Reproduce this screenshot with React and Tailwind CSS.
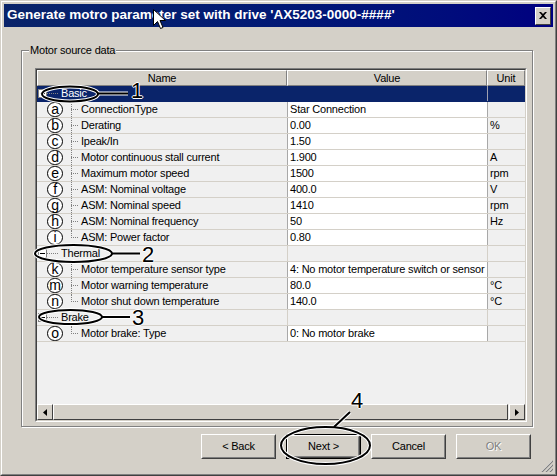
import React from 'react';

const rows = [
  { group: true, name: 'Basic', selected: true },
  { letter: 'a', name: 'ConnectionType', value: 'Star Connection', unit: '' },
  { letter: 'b', name: 'Derating', value: '0.00', unit: '%' },
  { letter: 'c', name: 'Ipeak/In', value: '1.50', unit: '' },
  { letter: 'd', name: 'Motor continuous stall current', value: '1.900', unit: 'A' },
  { letter: 'e', name: 'Maximum motor speed', value: '1500', unit: 'rpm' },
  { letter: 'f', name: 'ASM: Nominal voltage', value: '400.0', unit: 'V' },
  { letter: 'g', name: 'ASM: Nominal speed', value: '1410', unit: 'rpm' },
  { letter: 'h', name: 'ASM: Nominal frequency', value: '50', unit: 'Hz' },
  { letter: 'i', name: 'ASM: Power factor', value: '0.80', unit: '', last: true },
  { group: true, name: 'Thermal' },
  { letter: 'k', name: 'Motor temperature sensor type', value: '4: No motor temperature switch or sensor', unit: '' },
  { letter: 'm', name: 'Motor warning temperature', value: '80.0', unit: '°C' },
  { letter: 'n', name: 'Motor shut down temperature', value: '140.0', unit: '°C', last: true },
  { group: true, name: 'Brake' },
  { letter: 'o', name: 'Motor brake: Type', value: '0: No motor brake', unit: '', last: true },
];

const GroupRow = ({ row }) => {
  const sel = row.selected;
  return (
    <div className={`flex h-[16px] border-b ${sel ? 'bg-[#0a246a] border-[#0a246a] text-white' : 'bg-[#f0f0f0] border-[#d4d0c8]'}`}>
      <div className="w-[250px] flex items-center pl-[1px]">
        <div className="w-[9px] h-[9px] border border-[#808080] bg-white flex items-center justify-center">
          <div className="w-[5px] h-[1px] bg-black" />
        </div>
        <div className="w-[12px] h-full relative">
          <div className="absolute left-0 right-[1px] top-[7px] border-t border-dotted border-[#808080]" />
        </div>
        <span className="px-[2px] leading-[15px]">{row.name}</span>
      </div>
      <div className={`w-[200px] border-l ${sel ? 'border-[#0a246a]' : 'border-[#d4d0c8]'}`} />
      <div className={`flex-1 border-l ${sel ? 'border-[#a0a0b0]' : 'border-[#d4d0c8]'}`} />
    </div>
  );
};

const ItemRow = ({ row }) => (
  <div className="flex h-[16px] border-b border-[#d4d0c8] bg-[#f0f0f0]">
    <div className="w-[250px] flex items-center">
      <div className="w-[10px]" />
      <div className="w-[16px] h-[15px] rounded-full border-[1.5px] border-black bg-white flex items-center justify-center text-[14px] leading-none pb-[2px] text-black">
        {row.letter}
      </div>
      <div className="w-[17px] h-full relative">
        <div className={`absolute left-[8px] top-0 border-l border-dotted border-[#808080] ${row.last ? 'h-[8px]' : 'h-[15px]'}`} />
        <div className="absolute left-[8px] w-[7px] top-[7px] border-t border-dotted border-[#808080]" />
      </div>
      <span className="pl-[1px] leading-[15px] whitespace-nowrap">{row.name}</span>
    </div>
    <div className="w-[200px] border-l border-[#a8a8a8] bg-white pl-[2px] leading-[15px] whitespace-nowrap overflow-hidden">{row.value}</div>
    <div className="flex-1 border-l border-[#a8a8a8] pl-[2px] leading-[15px]">{row.unit}</div>
  </div>
);

const HeaderCell = ({ children, className }) => (
  <div className={`h-full flex items-center justify-center border-t border-l border-white border-r border-b border-r-[#808080] border-b-[#808080] bg-[#d4d0c8] ${className}`}>
    {children}
  </div>
);

const Btn = ({ children, def, disabled }) => (
  <div className={`w-[75px] h-[25px] ${def ? 'border border-black' : ''}`}>
    <div className="w-full h-full border border-t-white border-l-white border-r-[#404040] border-b-[#404040]">
      <div className={`w-full h-full border border-t-[#d4d0c8] border-l-[#d4d0c8] border-r-[#808080] border-b-[#808080] flex items-center justify-center ${disabled ? 'text-[#808080] [text-shadow:1px_1px_0_#fff]' : 'text-black'}`}>
        {children}
      </div>
    </div>
  </div>
);

const Num = ({ n, x, y }) => (
  <div
    className="absolute text-[22px] leading-none text-black [text-shadow:1px_0_0_#fff,-1px_0_0_#fff,0_1px_0_#fff,0_-1px_0_#fff]"
    style={{ left: x, top: y }}
  >
    {n}
  </div>
);

export default function App() {
  return (
    <div
      className="relative w-[557px] h-[476px] bg-[#d4d0c8] border border-t-[#d4d0c8] border-l-[#d4d0c8] border-r-[#404040] border-b-[#404040] text-[11px] tracking-[-0.2px] text-black overflow-hidden"
      style={{ fontFamily: '"Liberation Sans", Arial, sans-serif' }}
    >
      <div className="h-full border border-t-white border-l-white border-r-[#808080] border-b-[#808080] p-[2px] flex flex-col">
        {/* title bar */}
        <div className="h-[23px] flex items-center bg-gradient-to-r from-[#0a246a] to-[#000080] pr-[2px]">
          <span className="pl-[3px] text-white font-bold text-[13.5px] tracking-normal whitespace-nowrap">
            Generate motro parameter set with drive 'AX5203-0000-####'
          </span>
          <div className="ml-auto w-[16px] h-[18px] border border-t-white border-l-white border-r-[#404040] border-b-[#404040] bg-[#d4d0c8] flex items-center justify-center">
            <svg width="8" height="7" viewBox="0 0 8 7">
              <path d="M0 0h2l2 2 2-2h2L5 3.5 8 7H6L4 5 2 7H0l3-3.5z" fill="#000" />
            </svg>
          </div>
        </div>

        {/* group box */}
        <div className="relative mt-[23px] ml-[17px] mr-[20px] border border-[#808080] shadow-[inset_1px_1px_0_#fff,1px_1px_0_#fff] pt-[17px] pl-[13px] pr-[5px] pb-[4px]">
          <span className="absolute left-[7px] top-[-8px] px-[1px] bg-[#d4d0c8] leading-[14px]">Motor source data</span>

          <div className="h-[354px] border border-t-[#808080] border-l-[#808080] border-r-white border-b-white">
            <div className="h-full border border-t-[#404040] border-l-[#404040] border-r-[#d4d0c8] border-b-[#d4d0c8] bg-[#f0f0f0] flex flex-col">
              <div className="flex h-[16px]">
                <HeaderCell className="w-[250px]">Name</HeaderCell>
                <HeaderCell className="w-[200px]">Value</HeaderCell>
                <HeaderCell className="flex-1">Unit</HeaderCell>
              </div>
              {rows.map((r, i) => (r.group ? <GroupRow key={i} row={r} /> : <ItemRow key={i} row={r} />))}
              <div className="flex-1" />
              {/* horizontal scrollbar */}
              <div className="h-[16px] flex bg-[#ebe9e4]">
                <div className="w-[16px] h-full border border-t-white border-l-white border-r-[#404040] border-b-[#404040] bg-[#d4d0c8] flex items-center justify-center">
                  <svg width="4" height="7" viewBox="0 0 4 7"><path d="M4 0v7L0 3.5z" fill="#000" /></svg>
                </div>
                <div className="w-[455px] h-full border border-t-white border-l-white border-r-[#404040] border-b-[#404040] bg-[#d4d0c8]" />
                <div className="flex-1" />
                <div className="w-[16px] h-full border border-t-white border-l-white border-r-[#404040] border-b-[#404040] bg-[#d4d0c8] flex items-center justify-center">
                  <svg width="4" height="7" viewBox="0 0 4 7"><path d="M0 0v7l4-3.5z" fill="#000" /></svg>
                </div>
              </div>
            </div>
          </div>
        </div>

        {/* buttons */}
        <div className="mt-[7px] flex justify-end gap-[10px] pr-[22px]">
          <Btn>&lt; Back</Btn>
          <Btn def>Next &gt;</Btn>
          <Btn>Cancel</Btn>
          <Btn disabled>OK</Btn>
        </div>
      </div>

      {/* resize grip */}
      <svg className="absolute right-[3px] bottom-[3px]" width="12" height="12" viewBox="0 0 12 12">
        <path d="M11 1L1 11M11 5L5 11M11 9L9 11" stroke="#fff" strokeWidth="1" />
        <path d="M12 1L1 12M12 5L5 12M12 9L9 12" stroke="#808080" strokeWidth="1.2" />
      </svg>

      {/* annotations */}
      <svg className="absolute left-[-1px] top-[-1px] pointer-events-none" width="557" height="476" viewBox="0 0 557 476">
        <g fill="none" stroke="#fff" strokeWidth="4">
          <ellipse cx="70" cy="94" rx="28" ry="7.5" />
          <line x1="98" y1="93.5" x2="128" y2="93.5" />
          <ellipse cx="73.5" cy="253.5" rx="38.5" ry="8.5" />
          <line x1="112" y1="253.5" x2="140" y2="253.5" />
          <ellipse cx="70.5" cy="317" rx="31.5" ry="7" />
          <line x1="102" y1="317" x2="130" y2="317" />
          <ellipse cx="325.5" cy="445.5" rx="44.5" ry="18.5" />
          <line x1="334" y1="427" x2="350" y2="412" />
        </g>
        <g fill="none" stroke="#000" strokeWidth="2">
          <ellipse cx="70" cy="94" rx="28" ry="7.5" />
          <line x1="98" y1="93.5" x2="128" y2="93.5" />
          <ellipse cx="73.5" cy="253.5" rx="38.5" ry="8.5" />
          <line x1="112" y1="253.5" x2="140" y2="253.5" />
          <ellipse cx="70.5" cy="317" rx="31.5" ry="7" />
          <line x1="102" y1="317" x2="130" y2="317" />
          <ellipse cx="325.5" cy="445.5" rx="44.5" ry="18.5" />
          <line x1="334" y1="427" x2="350" y2="412" />
        </g>
      </svg>
      <Num n="1" x={130} y={79} />
      <Num n="2" x={141} y={243} />
      <Num n="3" x={131} y={306} />
      <Num n="4" x={350} y={389} />

      {/* mouse cursor */}
      <svg className="absolute left-[152px] top-[8px]" width="13" height="21" viewBox="0 0 13 21">
        <path d="M0.5 0.5V16.5L4.5 12.5L7.5 19.5L10 18.5L7 11.5H12.5Z" fill="#fff" stroke="#000" strokeWidth="1" strokeLinejoin="miter" />
      </svg>
    </div>
  );
}
